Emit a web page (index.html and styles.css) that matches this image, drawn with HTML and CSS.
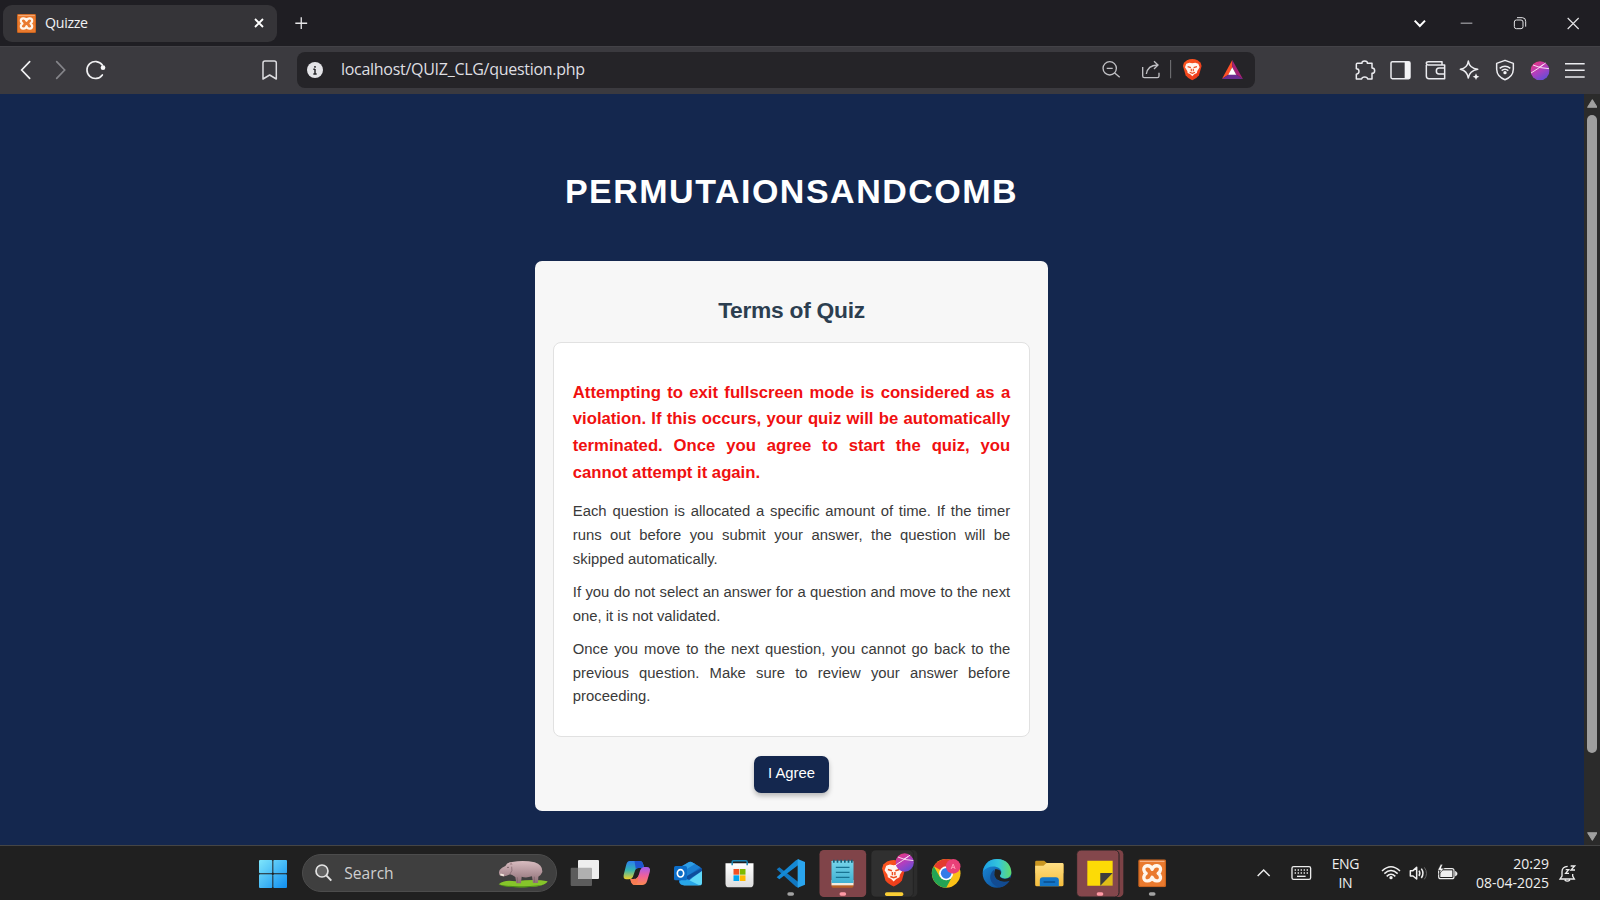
FILE: index.html
```html
<!DOCTYPE html>
<html lang="en">
<head>
<meta charset="utf-8">
<title>Quizze</title>
<link rel="stylesheet" href="styles.css">
</head>
<body>
<svg class="defs" width="0" height="0">
  <defs>
    <linearGradient id="ball" x1="0.2" y1="0" x2="0.8" y2="1"><stop offset="0" stop-color="#e8367e"/><stop offset=".5" stop-color="#b03fc0"/><stop offset="1" stop-color="#5a4fd8"/></linearGradient>
    <linearGradient id="win" gradientUnits="userSpaceOnUse" x1="0" y1="0" x2="84" y2="84"><stop offset="0" stop-color="#7fe6fb"/><stop offset="1" stop-color="#0f8ef0"/></linearGradient>
    <linearGradient id="hippo" x1="0" y1="0" x2="0" y2="1"><stop offset="0" stop-color="#d8bcc0"/><stop offset="1" stop-color="#8d6d75"/></linearGradient>
    <linearGradient id="copA" x1="0" y1="0" x2="0" y2="1"><stop offset="0" stop-color="#2b7ff0"/><stop offset=".5" stop-color="#35b5b0"/><stop offset="1" stop-color="#f2cf28"/></linearGradient>
    <linearGradient id="copB" x1="0" y1="0" x2="0" y2="1"><stop offset="0" stop-color="#a45cf0"/><stop offset=".5" stop-color="#f0609a"/><stop offset="1" stop-color="#fb8a50"/></linearGradient>
    <linearGradient id="edgeG" x1="0" y1="0" x2="1" y2="0"><stop offset="0" stop-color="#1ba0e4"/><stop offset=".55" stop-color="#34c5dc"/><stop offset="1" stop-color="#62dc68"/></linearGradient>
    <linearGradient id="edgeB" x1="0" y1="0" x2="1" y2="1"><stop offset="0" stop-color="#1a8fe0"/><stop offset="1" stop-color="#0c3f86"/></linearGradient>
    <linearGradient id="folder" x1="0" y1="0" x2="0" y2="1"><stop offset="0" stop-color="#ffdf85"/><stop offset="1" stop-color="#f5bd3c"/></linearGradient>
    <linearGradient id="note" x1="0" y1="0" x2="0" y2="1"><stop offset="0" stop-color="#77d5ea"/><stop offset="1" stop-color="#3fb0d2"/></linearGradient>
    <linearGradient id="store" x1="0" y1="0" x2="0" y2="1"><stop offset="0" stop-color="#fff"/><stop offset="1" stop-color="#dcdcdc"/></linearGradient>
    <linearGradient id="lion" x1="0" y1="0" x2="1" y2="1"><stop offset="0" stop-color="#ff5a20"/><stop offset="1" stop-color="#e8341a"/></linearGradient>
    <symbol id="xampp" viewBox="0 0 84 84">
      <rect width="84" height="84" rx="6" fill="#c9641f"/><rect x="4" y="4" width="76" height="76" rx="4" fill="#ea7a2e"/><path d="M5 6H79" stroke="#f6b285" stroke-width="4"/>
      <path d="M42 30C37 14 15 17 17 31Q18 38 24 42Q18 46 17 53C15 67 37 70 42 54C47 70 69 67 67 53Q66 46 60 42Q66 38 67 31C69 17 47 14 42 30Z" fill="none" stroke="#fff6ec" stroke-width="10" stroke-linejoin="round"/>
    </symbol>
    <symbol id="brave" viewBox="0 0 58 66">
      <path d="M13 5Q29-3 45 5L54 12L57 22L49 50Q44 58 29 65Q14 58 9 50L1 22L4 12Z" fill="url(#lion)"/>
      <path d="M11 15L20 12L29 14L38 12L47 15L51 26L44 37L43 43L35 47L29 53L23 47L15 43L14 37L7 26Z" fill="#fff4ee"/>
      <path d="M15 24L25 27M43 24L33 27M26 30V38M32 30V38M21 41L29 44L37 41" fill="none" stroke="#ee4c1e" stroke-width="3.500"/>
    </symbol>
    <symbol id="avatar" viewBox="0 0 58 58">
      <circle cx="29" cy="29" r="28.5" fill="url(#ball)"/>
      <path d="M2 36Q22 24 46 6M8 12Q28 22 56 23M26 19L40 10" fill="none" stroke="#f8dcf3" stroke-width="3"/>
    </symbol>
  </defs>
</svg>

<header class="tabs">
  <div class="tab">
    <svg class="favicon"><use href="#xampp"/></svg>
    <span class="tab-title">Quizze</span>
    <svg class="tab-x" viewBox="0 0 30 30"><path d="M3 3L27 27M27 3L3 27" stroke="#fff" stroke-width="5.500"/></svg>
  </div>
  <svg class="plus" viewBox="0 0 38 38"><path d="M19 1V37M1 19H37" stroke="#e6e6e8" stroke-width="4"/></svg>
  <svg class="winctl" viewBox="250 0 590 138" fill="none" stroke="#e4e4e6">
    <path d="M285 62L300.500 78L316 62" stroke="#fff" stroke-width="6"/>
    <path d="M423 69.500H458" stroke-width="3" stroke="#bdbdc0"/>
    <rect x="584" y="60" width="26" height="26" rx="6" stroke-width="3"/><path d="M592 53H608Q618 53 618 64V80" stroke-width="3"/>
    <path d="M744 54L777 87M777 54L744 87" stroke-width="3.500"/>
  </svg>
</header>

<nav class="toolbar">
  <svg class="nav-left" viewBox="0 138 350 144" fill="none" stroke-linecap="round">
    <path d="M89 185L65 210L89 235" stroke="#f1f1f3" stroke-width="5"/>
    <path d="M170 185L194 210L170 235" stroke="#85858a" stroke-width="5"/>
    <path d="M307 225A25.500 25.500 0 1 1 307 195" stroke="#f1f1f3" stroke-width="5"/>
    <circle cx="309" cy="203" r="7" fill="#f6f6f8"/>
  </svg>
  <svg class="bookmark" viewBox="760 138 100 144"><path d="M790 189Q790 183 796 183H824Q830 183 830 189V237L810 225L790 237Z" fill="none" stroke="#dcdce0" stroke-width="4.500" stroke-linejoin="round"/></svg>
  <div class="address">
    <svg class="info" viewBox="0 0 48 48"><circle cx="24" cy="24" r="24" fill="#e4e4e8"/><path d="M24 21V36M24 12V17M19 22H24M19 36H29" stroke="#252528" stroke-width="4.500"/></svg>
    <span class="url">localhost/QUIZ_CLG/question.php</span>
    <svg class="address-tools" viewBox="50 33 475 109" fill="none" stroke="#c0c0c4" stroke-width="4">
      <circle cx="88" cy="85" r="20"/><path d="M79 85H97M103 99L118 112"/>
      <path d="M187 81V108Q187 113 192 113H231Q236 113 236 108V98M198 102Q202 76 231 75M221 64L233 75L221 87"/>
      <path d="M271 60V115" stroke="#77777b" stroke-width="3"/>
      <svg x="307" y="56" width="58" height="66" stroke="none"><use href="#brave"/></svg>
      <g stroke="none"><path d="M456 60L425 117L446 103L456 82Z" fill="#ff5128"/><path d="M425 117H488L467 103H446Z" fill="#6a2d91"/><path d="M456 60L488 117L467 103L456 82Z" fill="#a62075"/><path d="M456 82L468 104H444Z" fill="#fff"/></g>
    </svg>
  </div>
  <svg class="extensions" viewBox="85 138 732 144" fill="none" stroke="#ececf0" stroke-width="4.500" stroke-linejoin="round">
    <path d="M113 190H127Q126 183 135 183Q144 183 143 190H157V204Q165 204 165 212Q165 220 157 220V237H144Q143 231 135 231Q127 231 126 237H110V223Q118 222 118 214Q118 206 110 206V193Q110 190 113 190Z"/>
    <rect x="214" y="185" width="57" height="51" rx="4"/><path d="M255 186H271V235H255Z" fill="#f4f4f6" stroke="none"/>
    <path d="M320 195V228Q320 236 328 236H375V195H326Q320 195 320 189Q320 185 326 185H367V194M375 204H358Q350 204 350 213Q350 222 358 222H375"/>
    <path d="M446 183Q449 205 474 208Q449 213 446 234Q442 212 422 208Q443 205 446 183Z"/><path d="M469 220L472 227L479 230L472 233L469 240L466 233L459 230L466 227Z" fill="#f4f4f6" stroke="none"/>
    <path d="M556 181L581 190V208Q580 231 556 239Q532 231 531 208V190Z"/><path d="M540 205Q556 192 572 205M546 212Q556 204 566 212" /><circle cx="556" cy="218" r="5" fill="#f4f4f6" stroke="none"/>
    <svg x="632" y="183" width="58" height="58" stroke="none"><use href="#avatar"/></svg>
    <path d="M736 191H795M736 211H795M736 231H795"/>
  </svg>
</nav>

<section class="viewport">
  <main class="page">
    <h1 class="title">PERMUTAIONSANDCOMB</h1>
    <div class="card">
      <h2 class="card-title">Terms of Quiz</h2>
      <div class="terms">
        <p class="warning">Attempting to exit fullscreen mode is considered as a violation. If this occurs, your quiz will be automatically terminated. Once you agree to start the quiz, you cannot attempt it again.</p>
        <p class="term">Each question is allocated a specific amount of time. If the timer runs out before you submit your answer, the question will be skipped automatically.</p>
        <p class="term">If you do not select an answer for a question and move to the next one, it is not validated.</p>
        <p class="term">Once you move to the next question, you cannot go back to the previous question. Make sure to review your answer before proceeding.</p>
      </div>
      <button class="agree">I Agree</button>
    </div>
  </main>
  <div class="scrollbar">
    <svg class="arrow" viewBox="0 0 32 26"><path d="M16 2L30 24H2Z" fill="#a0a0a0" stroke="#a0a0a0" stroke-width="3" stroke-linejoin="round"/></svg>
    <div class="thumb"></div>
    <svg class="arrow" viewBox="0 0 32 26"><path d="M16 24L30 2H2Z" fill="#a0a0a0" stroke="#a0a0a0" stroke-width="3" stroke-linejoin="round"/></svg>
  </div>
</section>

<footer class="taskbar">
  <svg class="start" viewBox="0 0 84 84"><g fill="url(#win)"><rect width="40" height="40" rx="3"/><rect x="43" width="41" height="40" rx="3"/><rect y="43" width="40" height="41" rx="3"/><rect x="43" y="43" width="41" height="41" rx="3"/></g></svg>
  <div class="search">
    <svg class="lens" viewBox="0 0 52 52"><circle cx="21" cy="21" r="18" fill="#626262" stroke="#e4e4e4" stroke-width="5"/><path d="M34 34L49 50" stroke="#e4e4e4" stroke-width="6"/></svg>
    <span class="search-text">Search</span>
    <svg class="hippo" viewBox="748 62 150 84">
      <path d="M750 135Q766 120 800 126Q860 118 897 126Q889 142 840 143Q775 146 750 135Z" fill="#86c52a"/><path d="M752 136Q800 145 885 136Q850 146 800 144Q765 143 752 136Z" fill="#4c8d18"/>
      <path d="M753 92Q759 84 770 80Q775 68 790 68Q825 62 858 69Q882 76 881 98Q877 108 869 112L868 131H853L850 111Q832 117 819 112L817 132H803L800 113Q789 105 784 105Q765 116 753 108Q749 101 753 92Z" fill="url(#hippo)"/>
      <path d="M857 112V129M806 114V130M784 104Q793 94 789 82" stroke="#785d65" stroke-width="3" fill="none" opacity=".65"/><path d="M755 105L766 108" stroke="#f3e9df" stroke-width="5"/><circle cx="778" cy="84" r="2" fill="#4a373b"/><path d="M783 76L787 68L792 76" fill="#a98a90"/>
    </svg>
  </div>
  <div class="apps">
    <svg class="app" viewBox="0 18 154.500 162"><rect x="35" y="83" width="64" height="55" rx="3" fill="#5c5c5c"/><rect x="57" y="60" width="63" height="57" rx="3" fill="#eee"/><path d="M57 83H96Q99 83 99 86V117H60Q57 117 57 114Z" fill="#b0b0b0"/></svg>
    <svg class="app" viewBox="154.500 18 154.500 162">
      <path d="M210 63H241Q249 63 252 76L254 84H237Q229 84 226 94L220 111Q217 118 208 118H201Q189 118 193 103L200 75Q203 63 210 63Z" fill="url(#copA)"/><path d="M225 63H241Q249 63 252 76L254 84H237Q232 84 229 88Z" fill="#1f55cf"/>
      <path d="M253 81H262Q274 81 271 95L263 122Q259 135 248 135H226Q217 135 214 124L212 117Q220 118 225 116H229Q235 114 238 104L242 91Q245 82 253 81Z" fill="url(#copB)"/><path d="M214 117H229Q235 114 238 104L234 127Q231 135 226 135Q217 135 214 124Z" fill="#f77b53"/>
    </svg>
    <svg class="app" viewBox="309 18 154.500 162">
      <path d="M357 85L390 66Q394 64 398 66L424 82Q429 85 429 90V128Q429 136 421 136H374Q360 135 360 122Z" fill="#1268bd"/><path d="M360 96L405 70L424 82L377 113Z" fill="#1b7fd2"/><path d="M390 66Q394 64 398 66L408 72L375 92L360 84Z" fill="#2f9fe6"/><path d="M384 108L429 84V93L384 121Z" fill="#0f4d9c"/><path d="M429 93V128Q429 136 421 136H374L400 113Z" fill="#60d8f8"/><path d="M376 113L421 136H374Q362 134 361 124Z" fill="#28a6e8"/>
      <rect x="345" y="78" width="39" height="43" rx="5" fill="#0c6dc8"/><ellipse cx="364.500" cy="100" rx="9.500" ry="11" fill="none" stroke="#fff" stroke-width="5"/>
    </svg>
    <svg class="app" viewBox="463.500 18 154.500 162">
      <path d="M498 70H582V131Q582 142 571 142H509Q498 142 498 131Z" fill="url(#store)"/><path d="M518 76V66Q518 62 522 62H559Q563 62 563 66V76" fill="none" stroke="#1a86b5" stroke-width="4.500"/>
      <rect x="522" y="87" width="17" height="17" fill="#f25022"/><rect x="541" y="87" width="17" height="17" fill="#7fba00"/><rect x="522" y="106" width="17" height="17" fill="#00a4ef"/><rect x="541" y="106" width="17" height="17" fill="#ffb900"/>
    </svg>
    <svg class="app" viewBox="618 18 154.500 162"><path d="M653 88L661 82L719 127V143L711 140Z" fill="#1177c0"/><path d="M653 112L661 118L719 74V58L711 61Z" fill="#1489d5"/><path d="M716 57L738 66V134L716 143Z" fill="#2aa5ee"/><rect x="685" y="157" width="20" height="10" rx="5" fill="#a3a3a3"/></svg>
    <svg class="app" viewBox="772.500 18 154.500 162"><rect x="780" y="30" width="140" height="141" rx="13" fill="#804449"/><rect x="816" y="125" width="66" height="18" rx="5" fill="#b76026"/><rect x="816" y="120" width="66" height="16" fill="#f1eadf"/><path d="M816 64Q816 62 819 62H879Q882 62 882 65V129H816Z" fill="url(#note)"/><path d="M823 59V68M834 59V68M845 59V68M856 59V68M867 59V68M877 59V68" stroke="#155f79" stroke-width="5"/><path d="M829 82H870M829 97H870M829 112H870" stroke="#187393" stroke-width="4"/><rect x="840" y="157" width="20" height="10" rx="5" fill="#ff9aa5"/></svg>
    <svg class="app" viewBox="-4 18 154.500 162"><rect x="20" y="31" width="124" height="139" rx="13" fill="#2c2c2c"/><rect x="5" y="30" width="127" height="141" rx="13" fill="#303030" stroke="#1e1e1e" stroke-width="2"/><svg x="37" y="56" width="72" height="87"><use href="#brave"/></svg><svg x="78" y="39" width="56" height="57"><use href="#avatar"/></svg><rect x="47" y="157" width="55" height="11" rx="5" fill="#fbce35"/></svg>
    <svg class="app" viewBox="150.500 18 154.500 162"><circle cx="229" cy="100" r="43" fill="#fbc116"/><path d="M229 100L191.800 78.500A43 43 0 0 1 266.200 78.500H229Z" fill="#e33b2e"/><path d="M191.800 78.500L210 111L229 121L246 112L229 143A43 43 0 0 1 191.800 78.500Z" fill="#23a455"/><circle cx="229" cy="100" r="21" fill="#fff"/><circle cx="229" cy="100" r="16" fill="#347ce8"/><circle cx="250" cy="79" r="22" fill="#e94078"/><path d="M244 87L250 72L256 87M246 82H254" fill="none" stroke="#ff9bb9" stroke-width="3"/></svg>
    <svg class="app" viewBox="305 18 154.500 162"><circle cx="383" cy="100" r="43" fill="url(#edgeB)"/><path d="M341 94C346 67 364 57 383 57C413 57 426 78 426 98C425 118 398 119 392 109Q391 105 396 99C399 77 358 71 341 94Z" fill="url(#edgeG)"/><path d="M376 88C350 108 366 137 390 142C407 140 416 130 421 122C403 131 383 124 376 110Q372 98 376 88Z" fill="#124b91"/><path d="M378 87Q370 106 382 118Q399 130 421 122Q427 117 423 112Q405 122 393 112Q389 107 395 101Q396 88 378 87Z" fill="#222"/></svg>
    <svg class="app" viewBox="459.500 18 154.500 162"><path d="M496 66Q496 62 500 62H523L532 70H577Q581 70 581 74V100H496Z" fill="#c99520"/><path d="M496 77H521L530 69H577Q581 69 581 73V134Q581 139 576 139H501Q496 139 496 134Z" fill="url(#folder)"/><path d="M510 139V121Q510 112 519 112H558Q567 112 567 121V139Z" fill="#1376c8"/><path d="M523 126H554" stroke="#0a4d8d" stroke-width="5" stroke-linecap="round"/></svg>
    <svg class="app" viewBox="614 18 154.500 162"><rect x="700" y="30" width="62" height="141" rx="13" fill="#7c4246"/><rect x="622" y="30" width="127" height="141" rx="13" fill="#84474c" stroke="#222" stroke-width="3"/><path d="M654 62H730V99L693 137H654Z" fill="#fcdb06"/><path d="M693 137V99H730V137Z" fill="#e0bd18"/><path d="M693 137V99H730Z" fill="#3e3e3e"/><rect x="682" y="157" width="20" height="10" rx="5" fill="#ff9aa5"/></svg>
    <svg class="app" viewBox="768.500 18 154.500 162"><svg x="805" y="58" width="84" height="84"><use href="#xampp"/></svg><rect x="837" y="157" width="20" height="10" rx="5" fill="#a3a3a3"/></svg>
  </div>
  <svg class="tray-left" viewBox="40 78 190 162" fill="none" stroke="#ececec"><path d="M54 168L72 150L90 168" stroke-width="4.500"/><rect x="157" y="140" width="56" height="38" rx="5" stroke-width="4"/><path d="M165 150H206M165 159H206" stroke-width="4" stroke-dasharray="4 5"/><path d="M172 169H198" stroke-width="4"/></svg>
  <div class="lang"><span>ENG</span><span>IN</span></div>
  <svg class="tray-mid" viewBox="415 78 255 162" fill="none" stroke="#f0f0f0" stroke-width="4.500">
    <path d="M427 153Q454 127 481 153M434 161Q454 142 474 161M441 169Q454 157 467 169"/><circle cx="454" cy="173" r="5" fill="#f0f0f0" stroke="none"/>
    <path d="M512 152H520L531 142V177L520 168H512Z" stroke-linejoin="round"/><path d="M538 152Q543 160 538 168M545 146Q555 160 545 174"/><path d="M554 142Q567 160 554 178" stroke="#666" stroke-width="3"/>
    <rect x="597" y="146" width="46" height="30" rx="6" stroke-width="3.500"/><path d="M602 151H638V171H602Z" fill="#f0f0f0" stroke="none"/><path d="M647 154L652 158V164L647 168Z" fill="#f0f0f0" stroke-width="2"/><path d="M603 133L594 151H602L598 163L613 145H605L609 133Z" fill="#fff" stroke="#222" stroke-width="2"/>
  </svg>
  <div class="clock"><span>20:29</span><span>08-04-2025</span></div>
  <svg class="bell" viewBox="955 78 60 162" fill="none" stroke="#ededed" stroke-width="4"><path d="M984 139Q967 140 967 155V168L961 177H1004L999 168V162M975 180Q983 187 991 180"/><path d="M978 149H987L978 160H988M993 138H1005L994 150H1006" stroke-width="4"/></svg>
</footer>
</body>
</html>
```
FILE: styles.css
```css
* { box-sizing: border-box; }
body {
  margin: 0;
  width: 1600px;
  height: 900px;
  overflow: hidden;
  display: flex;
  flex-direction: column;
  font-family: "Liberation Sans", Arial, sans-serif;
  background: #14274e;
}
svg { display: block; flex: none; }
.defs { position: absolute; }

.tabs {
  height: 46px;
  flex: none;
  display: flex;
  align-items: center;
  background: #1f1e23;
}
.tab {
  width: 274px;
  height: 37px;
  margin-left: 3px;
  padding: 0 13.5px 0 14px;
  display: flex;
  align-items: center;
  background: #353438;
  border-radius: 9px;
}
.favicon { width: 19px; height: 19px; }
.tab-title {
  margin: -1px 0 0 9px;
  font: 14.2px "Open Sans", "Noto Sans", sans-serif;
  letter-spacing: -0.3px;
  color: #f1f1f3;
}
.tab-x { width: 10px; height: 10px; margin-left: auto; }
.plus { width: 12.5px; height: 12.5px; margin-left: 18px; }
.winctl { width: 196.7px; height: 46px; margin-left: auto; }

.toolbar {
  height: 48px;
  flex: none;
  display: flex;
  align-items: center;
  background: #3b3a3f;
  box-shadow: inset 0 1px #434247;
  padding-bottom: 1px;
}
.nav-left { width: 116.7px; height: 48px; }
.bookmark { width: 33.3px; height: 48px; margin-left: 136.7px; }
.address {
  width: 958px;
  height: 36px;
  margin-left: 10.3px;
  padding-left: 10px;
  display: flex;
  align-items: center;
  background: #252428;
  border-radius: 8px;
}
.info { width: 16px; height: 16px; }
.url {
  margin: -2px 0 0 18px;
  font: 16px "Open Sans", "Noto Sans", sans-serif;
  letter-spacing: -0.28px;
  color: #dfdfe2;
}
.address-tools { width: 158.3px; height: 36.3px; margin-left: auto; }
.extensions { width: 244px; height: 48px; margin: 0 7.7px 0 auto; }

.viewport { height: 751px; flex: none; display: flex; }
.page {
  flex: 1;
  display: flex;
  flex-direction: column;
  align-items: center;
  padding-right: 1px;
}
.title {
  margin: 77px 0 50px;
  font-size: 34px;
  line-height: 40px;
  letter-spacing: 1.5px;
  color: #fff;
}
.card {
  width: 513.4px;
  height: 550px;
  padding: 36px 18.4px 0;
  display: flex;
  flex-direction: column;
  align-items: center;
  background: #f7f7f7;
  border-radius: 7px;
}
.card-title {
  margin: 0;
  font-size: 22.8px;
  line-height: 26px;
  letter-spacing: -0.28px;
  color: #2c3e50;
}
.terms {
  width: 476.6px;
  height: 395px;
  margin-top: 19px;
  padding: 36.5px 18.6px 0;
  background: #fff;
  border: 1px solid #e1e1e1;
  border-radius: 8px;
  text-align: justify;
}
.warning {
  margin: 0 0 14px;
  font-size: 16.7px;
  line-height: 26.7px;
  font-weight: bold;
  color: #f01010;
}
.term {
  margin: 0 0 9.4px;
  font-size: 14.85px;
  line-height: 23.75px;
  color: #3a3a3a;
}
.agree {
  width: 75px;
  height: 36.5px;
  margin-top: 19px;
  padding: 0 0 2px;
  border: 0;
  border-radius: 7px;
  background: #14274e;
  box-shadow: 0 3px 5px rgba(0, 0, 0, 0.25);
  color: #fff;
  font: 14.85px "Liberation Sans", Arial, sans-serif;
}
.scrollbar {
  width: 16px;
  padding: 5px 0 4px;
  display: flex;
  flex-direction: column;
  align-items: center;
  background: #2b2b2b;
}
.arrow { width: 10.7px; height: 9px; }
.thumb { width: 10.5px; height: 638px; margin: 7px 0 auto; border-radius: 6px; background: #9f9f9f; }

.taskbar {
  height: 55px;
  flex: none;
  display: flex;
  align-items: center;
  background: #202020;
  border-top: 1px solid #454545;
  color: #efefef;
  font-family: "Open Sans", "Noto Sans", sans-serif;
}
.start { width: 28px; height: 28px; margin: 2px 0 0 258.5px; }
.search {
  width: 255.5px;
  height: 38px;
  margin-left: 15px;
  padding: 0 8px 0 12.5px;
  display: flex;
  align-items: center;
  background: #3f3f3f;
  border: 1px solid #4c4c4c;
  border-radius: 19px;
}
.lens { width: 17.3px; height: 17.3px; }
.search-text { margin-left: 12px; font-size: 15.6px; color: #cfcfcf; }
.hippo { width: 50px; height: 28px; margin: 2px 0 0 auto; }
.apps { display: flex; margin-left: 2px; }
.app { width: 51.5px; height: 54px; }
.tray-left { width: 63.3px; height: 54px; margin-left: 76.3px; }
.lang, .clock {
  display: flex;
  flex-direction: column;
  font-size: 14px;
  line-height: 19px;
}
.lang { width: 61.7px; align-items: center; padding-right: 4px; letter-spacing: -0.3px; }
.tray-mid { width: 85px; height: 54px; }
.clock { width: 85.6px; align-items: flex-end; letter-spacing: -0.02px; }
.bell { width: 20px; height: 54px; margin-left: 9.4px; }
```
